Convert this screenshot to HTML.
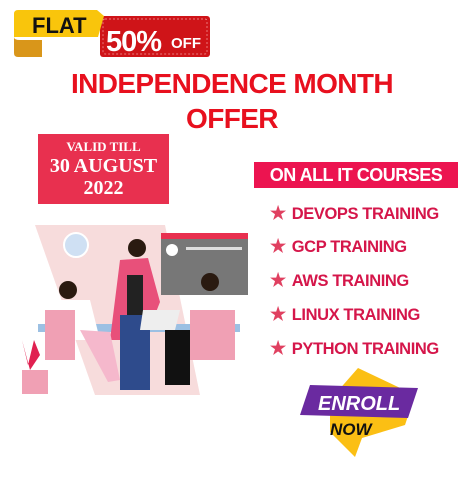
<!DOCTYPE html>
<html><head><style>
body{margin:0;width:464px;height:483px;background:#fff;position:relative;overflow:hidden;font-family:"Liberation Sans",sans-serif}
.a{position:absolute}
.t{font-weight:bold;color:#e8101e;width:464px;text-align:center;left:0;font-size:28px;letter-spacing:-0.6px}
.li{left:270px;font-weight:bold;color:#d5164a;font-size:16.5px;letter-spacing:-0.4px;white-space:nowrap}
.li span{color:#e04060;font-size:18px;margin-right:6px}
</style></head><body>
<svg class="a" style="left:0;top:0" width="232" height="70">
<rect x="100" y="16" width="110" height="41" rx="3" fill="#cf1418"/>
<rect x="103" y="19" width="104" height="35" rx="2" fill="none" stroke="#f3a0a0" stroke-width="0.7" stroke-dasharray="2 2"/>
<path d="M14 14 Q14 10 18 10 H97 L104 16 L98 37 H14Z" fill="#f9c50c"/>
<path d="M14 37 Q14 40 20 40 H42 V57 H18 Q14 57 14 53Z" fill="#d9961a"/>
<text x="32" y="33" font-family="Liberation Sans" font-weight="bold" font-size="22" fill="#111">FLAT</text>
<text x="106" y="51" font-family="Liberation Sans" font-weight="bold" font-size="29" fill="#fff" letter-spacing="-1">50%</text>
<text x="171" y="48" font-family="Liberation Sans" font-weight="bold" font-size="15" fill="#fff">OFF</text>
</svg>
<div class="a t" style="top:68px">INDEPENDENCE MONTH</div>
<div class="a t" style="top:103px">OFFER</div>
<div class="a" style="left:38px;top:134px;width:131px;height:70px;background:#e8304f;color:#fff;text-align:center;font-family:'Liberation Serif',serif;font-weight:bold">
<div style="font-size:13px;margin-top:5px">VALID TILL</div>
<div style="font-size:20px;line-height:22px">30 AUGUST</div>
<div style="font-size:20px;line-height:22px">2022</div></div>
<svg class="a" style="left:0;top:220px" width="260" height="180">
<path d="M35 5 H165 L200 175 H95Z" fill="#f7dcdc"/>
<circle cx="76" cy="25" r="12" fill="#cfe0f3" stroke="#fff" stroke-width="2"/>
<rect x="161" y="13" width="87" height="62" fill="#777"/><rect x="161" y="13" width="87" height="6" fill="#e8304f"/>
<circle cx="172" cy="30" r="6" fill="#fff"/><rect x="186" y="27" width="56" height="3" fill="#ddd"/>
<rect x="38" y="104" width="202" height="8" fill="#9cc0e3"/>
<path d="M120 40 L148 38 L160 82 L145 120 L110 120Z" fill="#e8507a"/>
<rect x="127" y="55" width="16" height="40" fill="#222"/>
<rect x="120" y="95" width="30" height="75" fill="#2e4b8c"/>
<circle cx="137" cy="28" r="9" fill="#2a1a10"/>
<circle cx="68" cy="70" r="9" fill="#2a1a10"/>
<path d="M60 80 H90 L100 120 H55Z" fill="#fff"/>
<rect x="45" y="90" width="30" height="50" fill="#f0a0b4"/>
<path d="M80 110 L110 112 L120 160 L108 162Z" fill="#f5b8cc"/>
<rect x="190" y="90" width="45" height="50" fill="#f0a0b4"/>
<rect x="165" y="110" width="25" height="55" fill="#111"/>
<circle cx="210" cy="62" r="9" fill="#2a1a10"/>
<path d="M143 90 H180 L175 110 H140Z" fill="#eee"/>
<path d="M22 120 L28 145 L34 120 L40 135 L30 150Z" fill="#e02050"/>
<rect x="22" y="150" width="26" height="24" fill="#f0a0b4"/>
</svg>
<div class="a" style="left:254px;top:162px;width:204px;height:26px;background:#ec1450;color:#fff;font-weight:bold;font-size:18px;text-align:center;line-height:26px;letter-spacing:-0.5px">ON ALL IT COURSES</div>
<div class="a li" style="top:203px"><span>★</span>DEVOPS TRAINING</div>
<div class="a li" style="top:236px"><span>★</span>GCP TRAINING</div>
<div class="a li" style="top:270px"><span>★</span>AWS TRAINING</div>
<div class="a li" style="top:304px"><span>★</span>LINUX TRAINING</div>
<div class="a li" style="top:338px"><span>★</span>PYTHON TRAINING</div>
<svg class="a" style="left:280px;top:360px" width="140" height="110">
<path d="M78 8 L135 35 L125 65 L82 78 L75 97 L50 72 L50 40Z" fill="#fbbf14"/>
<path d="M30 25 L138 28 L128 58 L20 55Z" fill="#6a2aa0"/>
<text x="38" y="50" font-family="Liberation Sans" font-weight="bold" font-style="italic" font-size="20" fill="#fff">ENROLL</text>
<text x="50" y="75" font-family="Liberation Sans" font-weight="bold" font-style="italic" font-size="17" fill="#111">NOW</text>
</svg>
</body></html>
